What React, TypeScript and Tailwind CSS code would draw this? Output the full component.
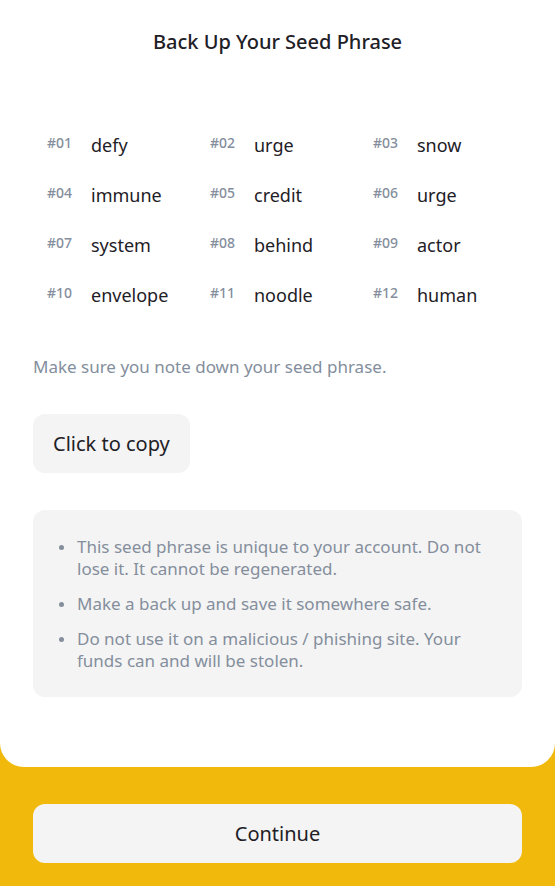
import React from "react";

const words = [
  "defy",
  "urge",
  "snow",
  "immune",
  "credit",
  "urge",
  "system",
  "behind",
  "actor",
  "envelope",
  "noodle",
  "human",
];

const notes = [
  "This seed phrase is unique to your account. Do not lose it. It cannot be regenerated.",
  "Make a back up and save it somewhere safe.",
  "Do not use it on a malicious / phishing site. Your funds can and will be stolen.",
];

export default function App() {
  return (
    <div
      className="min-h-[886px] w-full bg-[#F0B90B] flex flex-col"
      style={{ fontFamily: '"Noto Sans", "Open Sans", sans-serif' }}
    >
      {/* Card */}
      <div className="bg-white rounded-b-[24px] px-[33px] pb-[70px]">
        <h1 className="pt-[28px] text-center text-[20px] leading-[28px] font-medium text-[#1E2026]">
          Back Up Your Seed Phrase
        </h1>

        {/* Seed grid */}
        <div className="mt-[75px] grid grid-cols-[163px_163px_163px] pl-[14px] gap-y-[22px]">
          {words.map((w, i) => (
            <div key={i} className="flex items-start h-[28px]">
              <span className="w-[44px] pt-[3px] text-[14px] leading-[18px] font-medium text-[#848E9C]">
                #{String(i + 1).padStart(2, "0")}
              </span>
              <span className="text-[18px] leading-[28px] text-[#1E2026]">{w}</span>
            </div>
          ))}
        </div>

        <p className="mt-[46px] text-[17px] leading-[24px] text-[#848E9C]">
          Make sure you note down your seed phrase.
        </p>

        <button className="mt-[35px] h-[59px] px-[20px] rounded-[12px] bg-[#F4F4F4] text-[20px] text-[#1E2026]">
          Click to copy
        </button>

        <div className="mt-[37px] rounded-[12px] bg-[#F4F4F4] pt-[26px] pb-[25px] pl-[26px] pr-[26px]">
          <ul className="flex flex-col gap-[13px]">
            {notes.map((n) => (
              <li key={n} className="flex text-[17px] leading-[22px] text-[#848E9C]">
                <span className="w-[18px] shrink-0 flex pt-[9px]">
                  <span className="w-[5px] h-[5px] rounded-full bg-[#848E9C]" />
                </span>
                <span>{n}</span>
              </li>
            ))}
          </ul>
        </div>
      </div>

      {/* Footer */}
      <div className="px-[33px] pt-[37px] pb-[24px]">
        <button className="w-full h-[59px] rounded-[12px] bg-[#F4F4F4] text-[20px] text-[#1E2026]">
          Continue
        </button>
      </div>
    </div>
  );
}
